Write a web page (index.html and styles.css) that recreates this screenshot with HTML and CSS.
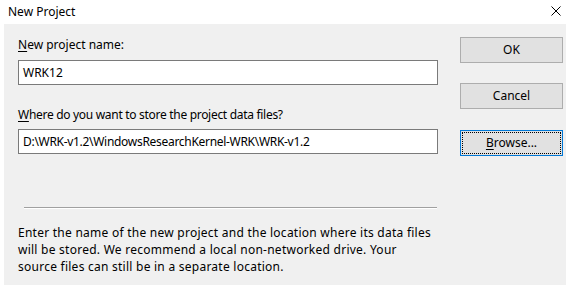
FILE: index.html
```html
<!DOCTYPE html>
<html>
<head>
<meta charset="utf-8">
<link rel="stylesheet" href="styles.css">
</head>
<body>
<div class="window">
  <div class="titlebar">
    <span class="title">New Project</span>
    <svg class="close" width="10" height="10" viewBox="0 0 10 10"><path d="M0.5 0.5 L9.5 9.5 M9.5 0.5 L0.5 9.5" stroke="#000" stroke-width="1" fill="none"/></svg>
  </div>
  <div class="dialog">
    <div class="main">
      <div class="label label1"><u>N</u>ew project name:</div>
      <div class="field">WRK12</div>
      <div class="label label2"><u>W</u>here do you want to store the project data files?</div>
      <div class="field field-path">D:\WRK-v1.2\WindowsResearchKernel-WRK\WRK-v1.2</div>
      <div class="separator"></div>
      <p class="info">Enter the name of the new project and the location where its data files will be stored. We recommend a local non-networked drive. Your source files can still be in a separate location.</p>
    </div>
    <div class="buttons">
      <div class="btn btn-ok">OK</div>
      <div class="btn btn-cancel">Cancel</div>
      <div class="btn btn-browse"><span class="focus"><u>B</u>rowse...</span></div>
    </div>
  </div>
</div>
</body>
</html>
```

FILE: styles.css
```css
html, body {
  margin: 0;
  padding: 0;
  background: #ffffff;
}
body {
  font-family: "Noto Sans", "Open Sans", "Liberation Sans", sans-serif;
  font-size: 12px;
  color: #000;
  width: 577px;
  height: 285px;
  overflow: hidden;
}
.window {
  display: flex;
  flex-direction: column;
  height: 285px;
}
.titlebar {
  height: 24px;
  display: flex;
  align-items: center;
  justify-content: space-between;
  padding: 0 16px 0 8px;
  box-sizing: border-box;
}
.title {
  font-size: 12px;
  line-height: 16px;
  margin-top: -1px;
}
.close {
  margin-top: -2px;
}
.dialog {
  margin-left: 4px;
  width: 562px;
  flex: 1;
  background: #f0f0f0;
  display: flex;
}
.main {
  width: 420px;
  padding-left: 14px;
  padding-top: 13px;
}
.label {
  line-height: 16px;
  height: 16px;
}
.label1 {
  margin-bottom: 7px;
}
.label2 {
  margin-top: 22px;
  margin-bottom: 6px;
  letter-spacing: -0.3px;
}
u {
  text-decoration: underline;
  text-underline-offset: 2px;
}
.field {
  height: 25px;
  box-sizing: border-box;
  border: 1px solid #7a7a7a;
  background: #fff;
  padding-left: 4px;
  line-height: 23px;
  white-space: nowrap;
  overflow: hidden;
}
.field-path {
  letter-spacing: -0.3px;
}
.separator {
  margin-top: 53px;
  margin-left: 6px;
  width: 413px;
  height: 1px;
  background: #a0a0a0;
  border-bottom: 1px solid #ffffff;
}
.info {
  margin: 15px 0 0 0;
  line-height: 17px;
  width: 416px;
  letter-spacing: 0.25px;
}
.buttons {
  margin-left: 22px;
  padding-top: 13px;
  display: flex;
  flex-direction: column;
  width: 103px;
}
.btn {
  height: 26px;
  box-sizing: border-box;
  border: 1px solid #adadad;
  background: #e1e1e1;
  display: flex;
  align-items: center;
  justify-content: center;
  line-height: 16px;
}
.btn-cancel {
  margin-top: 20px;
}
.btn-browse {
  margin-top: 21px;
  border: 1px solid #0078d7;
  padding: 1px;
}
.btn-browse .focus {
  flex: 1;
  align-self: stretch;
  display: flex;
  align-items: center;
  justify-content: center;
  border: 1px dotted #000;
}
```
